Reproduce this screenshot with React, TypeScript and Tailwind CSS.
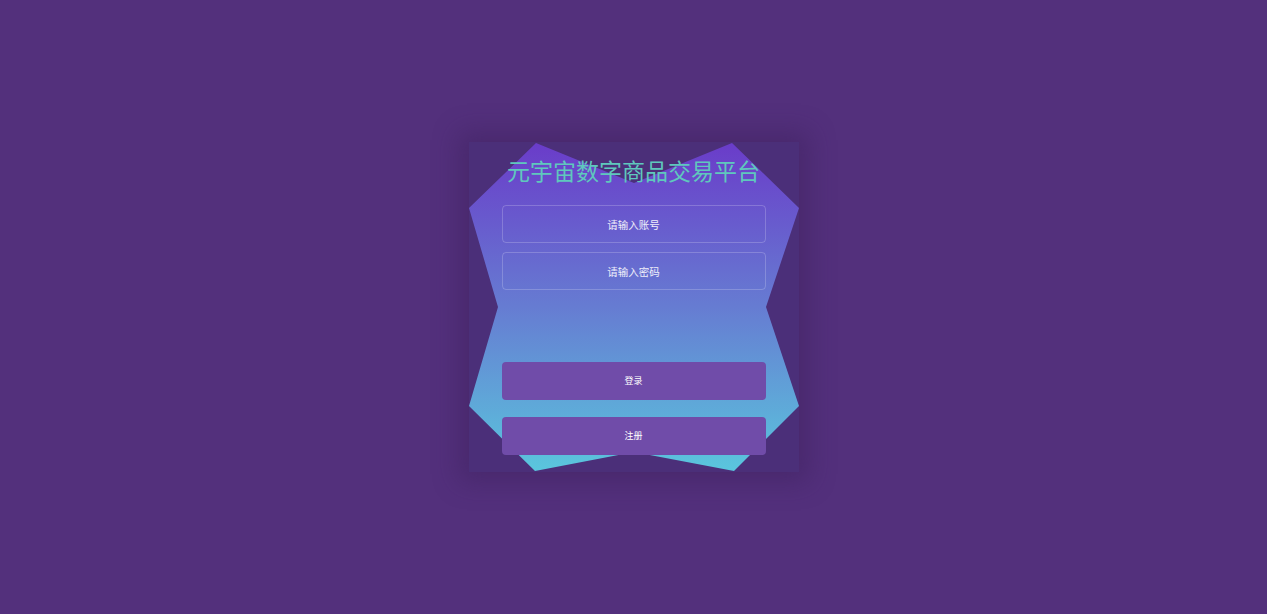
export default function App() {
  return (
    <div className="w-full h-[614px] bg-[#53307c] flex items-center justify-center font-['Noto_Sans_CJK_SC','Noto_Sans',sans-serif]">
      <div className="relative w-[330px] h-[330px] bg-[#4b2f79] shadow-[0_0_24px_10px_rgba(60,30,90,0.45)]">
        {/* star shaped gradient backdrop */}
        <svg className="absolute inset-0" width="330" height="330" viewBox="0 0 330 330">
          <defs>
            <linearGradient id="bgGrad" x1="0" y1="0" x2="0" y2="1">
              <stop offset="0%" stopColor="#6a3cc9" />
              <stop offset="50%" stopColor="#667cd2" />
              <stop offset="100%" stopColor="#5ac6dd" />
            </linearGradient>
          </defs>
          <polygon
            points="67,1 165,41 263,1 330,66 297,165 330,264 265,329 165,310 66,329 0,264 29,165 0,66"
            fill="url(#bgGrad)"
          />
        </svg>

        <div className="relative flex flex-col items-center">
          <h1 className="mt-[13px] h-[30px] leading-[30px] text-[23px] font-normal text-[#5fc8bd]">
            元宇宙数字商品交易平台
          </h1>

          <input
            placeholder="请输入账号"
            className="mt-[20px] w-[264px] h-[38px] rounded bg-transparent border border-white/20 text-center text-[10.5px] text-white placeholder:text-white/90 outline-none"
          />
          <input
            type="password"
            placeholder="请输入密码"
            className="mt-[9px] w-[264px] h-[38px] rounded bg-transparent border border-white/20 text-center text-[10.5px] text-white placeholder:text-white/90 outline-none"
          />

          <button className="mt-[72px] w-[264px] h-[38px] rounded bg-[#704ca9] text-white text-[9px]">
            登录
          </button>
          <button className="mt-[17px] w-[264px] h-[38px] rounded bg-[#704ca9] text-white text-[9px]">
            注册
          </button>
        </div>
      </div>
    </div>
  );
}
